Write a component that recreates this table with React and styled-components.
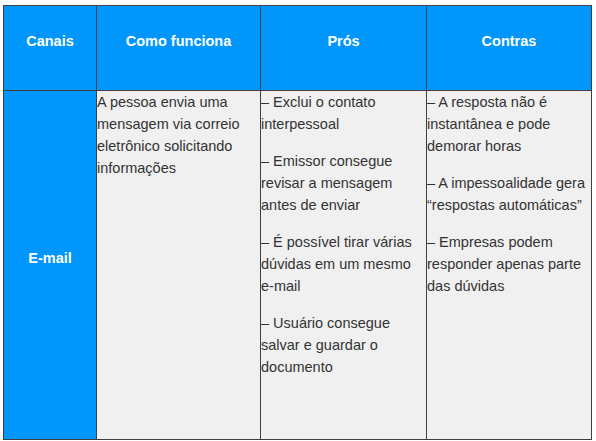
import React from "react";
import styled, { createGlobalStyle } from "styled-components";

const Global = createGlobalStyle`
  html, body { margin: 0; padding: 0; background: #ffffff; }
  body { font-family: "Liberation Sans", Arial, sans-serif; }
`;

const Page = styled.div`
  padding: 5px 0 0 3px;
`;

const Table = styled.div`
  display: grid;
  grid-template-columns: 92px 163px 165px 164px;
  grid-template-rows: 84px 348px;
  gap: 1px;
  padding: 1px;
  width: max-content;
  background: #3f3f3f;
`;

const HeadCell = styled.div`
  background: #0096fb;
  color: #ffffff;
  font-weight: bold;
  font-size: 14.5px;
  line-height: 22px;
  display: flex;
  align-items: center;
  justify-content: center;
  text-align: center;
`;

const LabelCell = styled(HeadCell)``;

const BodyCell = styled.div`
  background: #f0f0f0;
  color: #333333;
  font-size: 14.5px;
  line-height: 22px;
`;

const P = styled.p`
  margin: 0 0 15px;
`;

const NoWrap = styled.span`
  white-space: nowrap;
`;

const cols = ["Canais", "Como funciona", "Prós", "Contras"];

const pros = [
  "– Exclui o contato interpessoal",
  "– Emissor consegue revisar a mensagem antes de enviar",
  <>
    – É possível tirar várias dúvidas em um mesmo <NoWrap>e-mail</NoWrap>
  </>,
  "– Usuário consegue salvar e guardar o documento",
];

const contras = [
  "– A resposta não é instantânea e pode demorar horas",
  "– A impessoalidade gera “respostas automáticas”",
  "– Empresas podem responder apenas parte das dúvidas",
];

export default function App() {
  return (
    <Page>
      <Global />
      <Table>
        {cols.map((c) => (
          <HeadCell key={c}>
            <P>{c}</P>
          </HeadCell>
        ))}
        <LabelCell>
          <P>E-mail</P>
        </LabelCell>
        <BodyCell>
          <P>A pessoa envia uma mensagem via correio eletrônico solicitando informações</P>
        </BodyCell>
        <BodyCell>
          {pros.map((t, i) => (
            <P key={i}>{t}</P>
          ))}
        </BodyCell>
        <BodyCell>
          {contras.map((t, i) => (
            <P key={i}>{t}</P>
          ))}
        </BodyCell>
      </Table>
    </Page>
  );
}
